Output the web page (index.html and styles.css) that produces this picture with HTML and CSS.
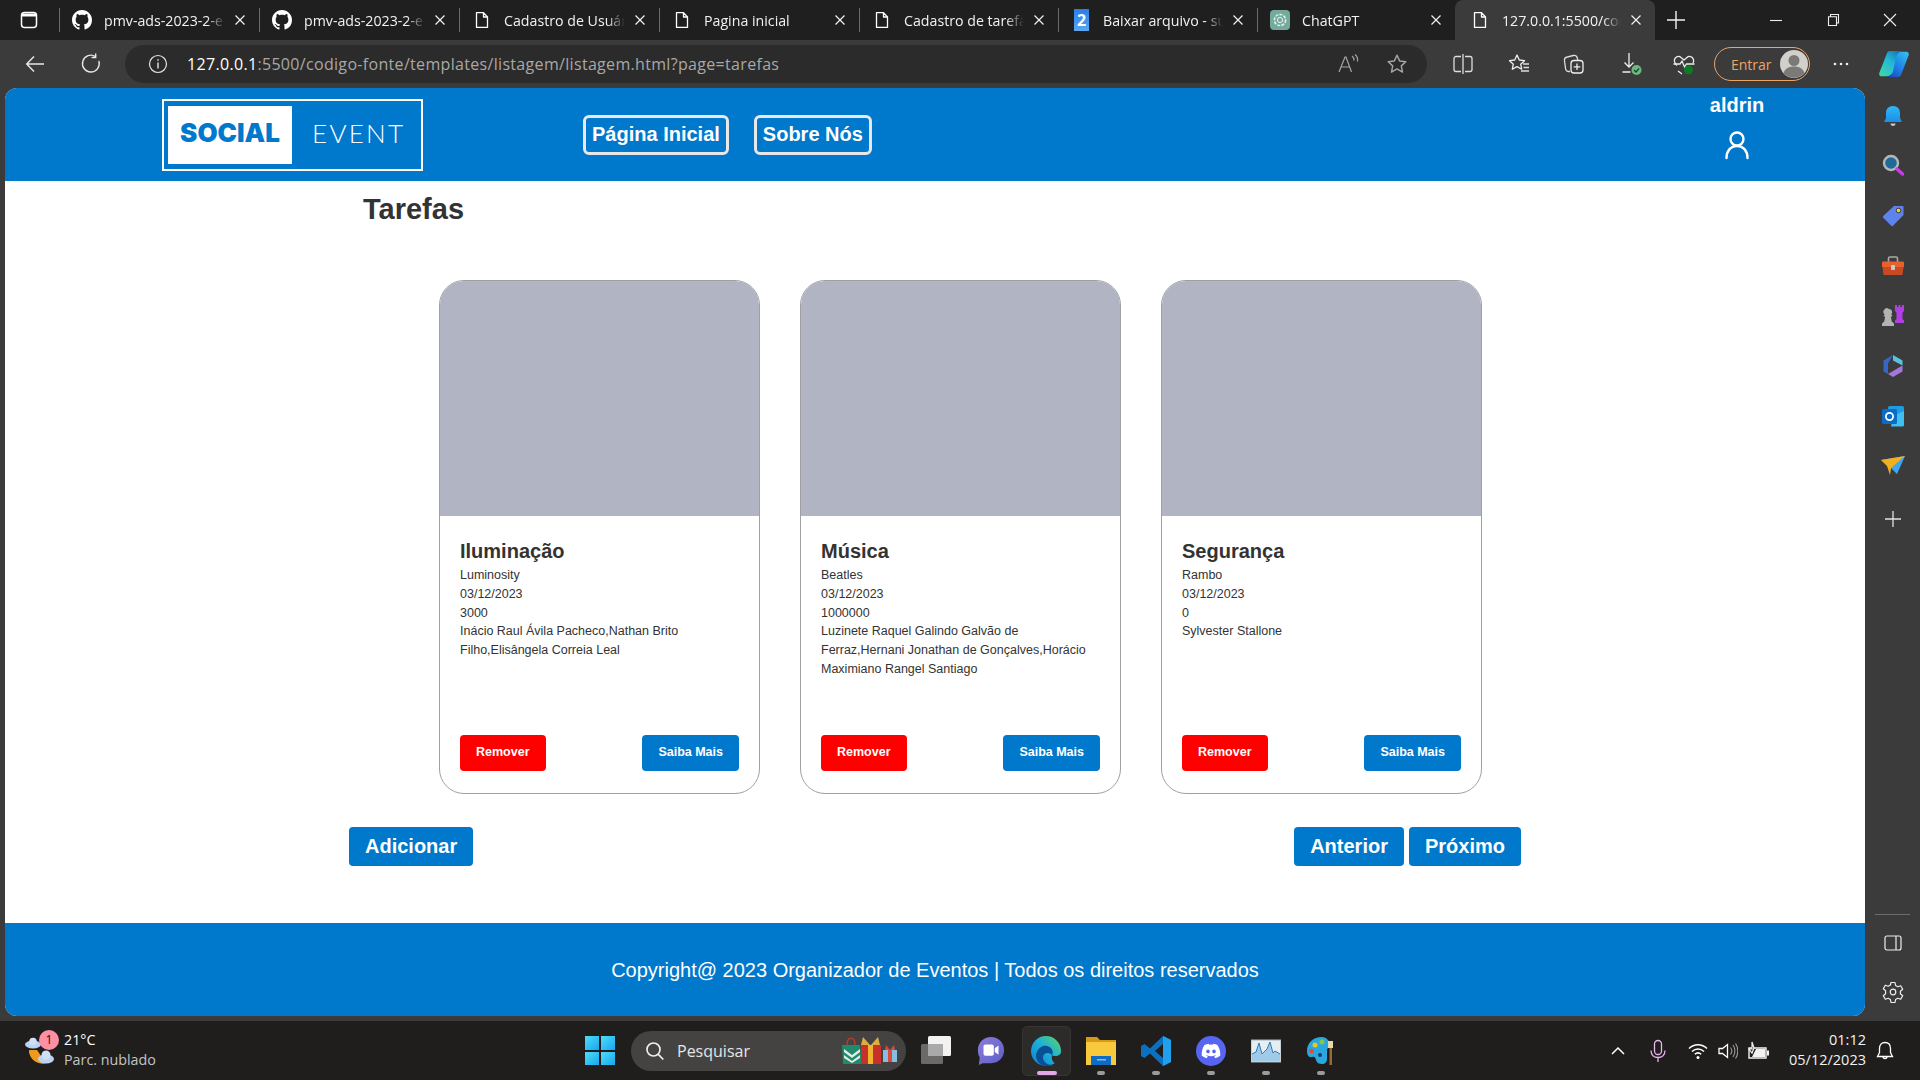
FILE: index.html
```html
<!DOCTYPE html>
<html lang="pt-BR">
<head>
<meta charset="utf-8">
<title>Tarefas</title>
<link rel="stylesheet" href="styles.css">
</head>
<body>
<svg class="sprite" width="0" height="0" aria-hidden="true">
  <defs>
    <symbol id="gh" viewBox="0 0 16 16"><path fill="#fff" d="M8 0C3.58 0 0 3.58 0 8c0 3.54 2.29 6.53 5.47 7.59.4.07.55-.17.55-.38 0-.19-.01-.82-.01-1.49-2.01.37-2.53-.49-2.69-.94-.09-.23-.48-.94-.82-1.13-.28-.15-.68-.52-.01-.53.63-.01 1.08.58 1.23.82.72 1.21 1.87.87 2.33.66.07-.52.28-.87.51-1.07-1.78-.2-3.64-.89-3.64-3.95 0-.87.31-1.59.82-2.15-.08-.2-.36-1.02.08-2.12 0 0 .67-.21 2.2.82.64-.18 1.32-.27 2-.27.68 0 1.36.09 2 .27 1.53-1.04 2.2-.82 2.2-.82.44 1.1.16 1.92.08 2.12.51.56.82 1.27.82 2.15 0 3.07-1.87 3.75-3.65 3.95.29.25.54.73.54 1.48 0 1.07-.01 1.93-.01 2.2 0 .21.15.46.55.38A8.013 8.013 0 0016 8c0-4.42-3.58-8-8-8z"/></symbol>
    <symbol id="doc" viewBox="0 0 20 20"><path fill="none" stroke="#fff" stroke-width="1.3" stroke-linejoin="round" d="M4.5 2.6h7l4 4.4v10.400h-11zM11.500 2.600v4.400h4"/></symbol>
    <symbol id="x" viewBox="0 0 12 12"><path fill="none" stroke="#f2f2f2" stroke-width="1.2" d="M1.500 1.500l9 9M10.500 1.500l-9 9"/></symbol>
    <symbol id="star" viewBox="0 0 20 20"><path fill="none" stroke="currentColor" stroke-width="1.3" stroke-linejoin="round" d="M10 2l2.400 5.200 5.600.7-4.100 3.800 1.100 5.600-5-2.800-5 2.800 1.100-5.600L2 7.900l5.600-.7z"/></symbol>
    <symbol id="dot" viewBox="0 0 8 4"><rect width="8" height="4" rx="2" fill="#9b9b9b"/></symbol>
  </defs>
</svg>

<div class="tabstrip">
  <div class="tab-side">
    <svg class="ico-18" viewBox="0 0 18 18"><rect x="1.500" y="1.500" width="15" height="15" rx="3" fill="none" stroke="#fff" stroke-width="1.500"/><path d="M2 2.500h14v3H2z" fill="#fff"/></svg>
  </div>
  <div class="tab"><svg class="fav"><use href="#gh"/></svg><span class="tab-title">pmv-ads-2023-2-e</span><svg class="tab-x"><use href="#x"/></svg></div>
  <div class="tab"><svg class="fav"><use href="#gh"/></svg><span class="tab-title">pmv-ads-2023-2-e</span><svg class="tab-x"><use href="#x"/></svg></div>
  <div class="tab"><svg class="fav"><use href="#doc"/></svg><span class="tab-title">Cadastro de Usuário</span><svg class="tab-x"><use href="#x"/></svg></div>
  <div class="tab"><svg class="fav"><use href="#doc"/></svg><span class="tab-title">Pagina inicial</span><svg class="tab-x"><use href="#x"/></svg></div>
  <div class="tab tab-199"><svg class="fav"><use href="#doc"/></svg><span class="tab-title">Cadastro de tarefas</span><svg class="tab-x"><use href="#x"/></svg></div>
  <div class="tab tab-199"><span class="fav fav-two">2</span><span class="tab-title">Baixar arquivo - sua</span><svg class="tab-x"><use href="#x"/></svg></div>
  <div class="tab tab-198"><svg class="fav" viewBox="0 0 20 20"><rect width="20" height="20" rx="4" fill="#74aa9c"/><circle cx="10" cy="10" r="5.600" fill="none" stroke="#e8f2ef" stroke-width="1.500" stroke-dasharray="3 1.200"/><circle cx="10" cy="10" r="2.600" fill="none" stroke="#e8f2ef" stroke-width="1"/></svg><span class="tab-title">ChatGPT</span><svg class="tab-x"><use href="#x"/></svg></div>
  <div class="tab tab-active"><svg class="fav"><use href="#doc"/></svg><span class="tab-title">127.0.0.1:5500/codigo</span><svg class="tab-x"><use href="#x"/></svg></div>
  <div class="newtab"><svg class="ico-20" viewBox="0 0 20 20"><path stroke="#f2f2f2" stroke-width="1.400" d="M10 1v18M1 10h18"/></svg></div>
  <div class="winctl">
    <svg class="ico-14" viewBox="0 0 14 14"><path stroke="#eee" stroke-width="1.100" d="M1 7.500h12"/></svg>
    <svg class="ico-14" viewBox="0 0 14 14"><path fill="none" stroke="#eee" stroke-width="1.100" d="M2.500 3.800h8v8.700h-8zM4.500 3.800V1.500h8v8.500h-2"/></svg>
    <svg class="ico-14" viewBox="0 0 14 14"><path stroke="#eee" stroke-width="1.100" d="M1 1l12 12M13 1L1 13"/></svg>
  </div>
</div>

<div class="toolbar">
  <div class="tool tool-first"><svg class="ico-22" viewBox="0 0 22 22"><path fill="none" stroke="#e6e6e6" stroke-width="1.500" d="M20 11H3M10 3.500L2.700 11l7.300 7.500"/></svg></div>
  <div class="tool"><svg class="ico-22" viewBox="0 0 22 22"><path fill="none" stroke="#e6e6e6" stroke-width="1.400" d="M15.500 3.600A8.400 8.400 0 1 0 19 8.500M15.700 1v3.500h-3.600" stroke-linecap="round"/></svg></div>
  <div class="address">
    <svg class="ico-20 info" viewBox="0 0 20 20"><circle cx="10" cy="10" r="8.500" fill="none" stroke="#e6e6e6" stroke-width="1.200"/><path stroke="#e6e6e6" stroke-width="1.400" d="M10 8.500v6M10 5.200v1.600"/></svg>
    <span class="url"><span class="url-host">127.0.0.1</span>:5500/codigo-fonte/templates/listagem/listagem.html?page=tarefas</span>
    <div class="addr-actions">
      <svg class="ico-22 muted" viewBox="0 0 22 22"><path fill="none" stroke="currentColor" stroke-width="1.200" d="M2 19L8 4h1l5.500 15M4.200 14h8M15 3c1.500 1 2.200 2.500 2 4.500M18 1.500c2 1.700 3 4 2.500 7"/></svg>
      <svg class="ico-22 muted"><use href="#star"/></svg>
    </div>
  </div>
  <div class="tool tool-split"><svg class="ico-22" viewBox="0 0 22 22"><path fill="none" stroke="#ddd" stroke-width="1.300" d="M9 3.500H4a2 2 0 0 0-2 2v11a2 2 0 0 0 2 2h5M13 3.500h5a2 2 0 0 1 2 2v11a2 2 0 0 1-2 2h-5M11 1v20"/></svg></div>
  <div class="tool"><svg class="ico-22" viewBox="0 0 22 22"><path fill="none" stroke="#eee" stroke-width="1.300" stroke-linejoin="round" d="M9 2l2.300 5 5.200.7-3.800 3.500 1 5-4.700-2.600L4.300 16.200l1-5L1.500 7.700 6.700 7z"/><path stroke="#ddd" stroke-width="1.300" d="M15 11h6M15.500 14.500H21M13 18h8"/></svg></div>
  <div class="tool tool-54"><svg class="ico-22" viewBox="0 0 22 22"><path fill="none" stroke="#ddd" stroke-width="1.300" d="M7 18.500H5.500a3 3 0 0 1-2.800-2.200L1.500 8a3.500 3.500 0 0 1 2.800-4l6-1.500c2-.4 3.500.6 4 2.500l.5 2"/><rect x="8" y="7.500" width="12" height="12.500" rx="3" fill="#3b3b3b" stroke="#eee" stroke-width="1.300"/><path stroke="#eee" stroke-width="1.300" d="M14 10.500v6.500M10.700 13.800h6.600"/></svg></div>
  <div class="tool tool-62"><svg class="ico-22" viewBox="0 0 22 22"><path fill="none" stroke="#eee" stroke-width="1.300" d="M8 0v14M3.500 9.500L8 14l4.500-4.500M1.500 19h8"/><circle cx="15.500" cy="17" r="5" fill="#6cb981"/><path fill="none" stroke="#2a3a2d" stroke-width="1.200" d="M13 17l2 2 3-3.500"/></svg></div>
  <div class="tool tool-health"><svg class="ico-22" viewBox="0 0 22 22"><path fill="none" stroke="#eee" stroke-width="1.300" stroke-linejoin="round" d="M4 12.500C2 10.500 1 8.500 1.500 6.500c.8-3 4.500-4 6.500-2l3 2.500 3-2.500c2-2 5.700-1 6.500 2 .3 1.200.1 2.400-.4 3.500M5 18l4 3"/><path fill="none" stroke="#eee" stroke-width="1.300" d="M.5 11H7l2-3 2.500 6 2-3h8"/><circle cx="15.500" cy="17" r="4.500" fill="#0f7a26"/></svg></div>
  <div class="signin"><span class="signin-label">Entrar</span><span class="avatar"><svg class="ico-28" viewBox="0 0 28 28"><circle cx="14" cy="14" r="14" fill="#d2d0cb"/><circle cx="14" cy="10.500" r="5.500" fill="#7b7a78"/><path d="M3.500 23c1.500-4.500 5.500-6.500 10.500-6.500s9 2 10.500 6.500a14 14 0 0 1-21 0z" fill="#7b7a78"/></svg></span></div>
  <div class="tool tool-more"><svg class="ico-20" viewBox="0 0 20 20"><circle cx="4" cy="10" r="1.300" fill="#eee"/><circle cx="10" cy="10" r="1.300" fill="#eee"/><circle cx="16" cy="10" r="1.300" fill="#eee"/></svg></div>
  <div class="tool tool-copilot"><svg class="ico-copilot" viewBox="0 0 92 80"><defs><linearGradient id="cp1" x1="0" y1="1" x2=".8" y2="0"><stop offset="0" stop-color="#43d9a5"/><stop offset=".6" stop-color="#22b7d6"/><stop offset="1" stop-color="#1877b0"/></linearGradient><linearGradient id="cp2" x1="1" y1="0" x2=".2" y2="1"><stop offset="0" stop-color="#35c4ef"/><stop offset=".6" stop-color="#1f7fe6"/><stop offset="1" stop-color="#2148c4"/></linearGradient></defs><path fill="url(#cp2)" d="M67 75C64 79 60 80 54 80H22C34 78 38 72 40 62L50 18C52 8 60 2 72 2H84C90 2 93 7 91 13z"/><path fill="url(#cp1)" d="M25 5C28 1 32 0 38 0H72C60 2 56 8 53 18L43 62C41 72 30 78 20 78H8C2 78-1 73 1 67z"/></svg></div>
</div>

<div class="workarea">
  <div class="page">
    <header class="site-header">
      <div class="logo">
        <div class="logo-box"><span class="logo-social">SOCIAL</span></div>
        <span class="logo-event">EVENT</span>
      </div>
      <nav class="nav">
        <a class="nav-btn">Página Inicial</a>
        <a class="nav-btn">Sobre Nós</a>
      </nav>
      <div class="user">
        <span class="user-name">aldrin</span>
        <svg class="user-ico" viewBox="0 0 24 30"><circle cx="12" cy="9" r="6.500" fill="none" stroke="#fff" stroke-width="2.400"/><path fill="none" stroke="#fff" stroke-width="2.400" stroke-linecap="round" d="M1.500 28c0-7 4-12 10.500-12s10.500 5 10.500 12"/></svg>
      </div>
    </header>

    <main class="content">
      <h1 class="page-title">Tarefas</h1>
      <section class="cards">
        <article class="card">
          <div class="card-img"></div>
          <div class="card-body">
            <h2 class="card-title">Iluminação</h2>
            <p class="card-line">Luminosity</p>
            <p class="card-line">03/12/2023</p>
            <p class="card-line">3000</p>
            <p class="card-line">Inácio Raul Ávila Pacheco,Nathan Brito Filho,Elisângela Correia Leal</p>
            <div class="card-actions"><button class="btn-sm btn-red">Remover</button><button class="btn-sm btn-blue">Saiba Mais</button></div>
          </div>
        </article>
        <article class="card">
          <div class="card-img"></div>
          <div class="card-body">
            <h2 class="card-title">Música</h2>
            <p class="card-line">Beatles</p>
            <p class="card-line">03/12/2023</p>
            <p class="card-line">1000000</p>
            <p class="card-line">Luzinete Raquel Galindo Galvão de Ferraz,Hernani Jonathan de Gonçalves,Horácio Maximiano Rangel Santiago</p>
            <div class="card-actions"><button class="btn-sm btn-red">Remover</button><button class="btn-sm btn-blue">Saiba Mais</button></div>
          </div>
        </article>
        <article class="card">
          <div class="card-img"></div>
          <div class="card-body">
            <h2 class="card-title">Segurança</h2>
            <p class="card-line">Rambo</p>
            <p class="card-line">03/12/2023</p>
            <p class="card-line">0</p>
            <p class="card-line">Sylvester Stallone</p>
            <div class="card-actions"><button class="btn-sm btn-red">Remover</button><button class="btn-sm btn-blue">Saiba Mais</button></div>
          </div>
        </article>
      </section>
      <div class="pager">
        <button class="btn-lg">Adicionar</button>
        <div class="pager-right"><button class="btn-lg">Anterior</button><button class="btn-lg">Próximo</button></div>
      </div>
    </main>

    <footer class="site-footer">Copyright@ 2023 Organizador de Eventos | Todos os direitos reservados</footer>
  </div>

  <aside class="sidepanel">
    <div class="side-top">
      <svg class="ico-24" viewBox="0 0 24 24"><defs><linearGradient id="bell" x1="0" y1="0" x2="0" y2="1"><stop offset="0" stop-color="#2fb7f5"/><stop offset="1" stop-color="#1a8fe8"/></linearGradient></defs><path fill="url(#bell)" d="M12 2c4.500 0 7 3 7 7v5l2 4H3l2-4V9c0-4 2.500-7 7-7z"/><path fill="#c9c9c9" d="M9.500 19.500h5c0 1.500-1 2.500-2.500 2.500s-2.500-1-2.500-2.500z"/></svg>
      <svg class="ico-24 side-search" viewBox="0 0 24 24"><circle cx="10" cy="10" r="7" fill="#1f6a96" stroke="#b7b7b7" stroke-width="2.400"/><path stroke="#c43fe0" stroke-width="3.400" stroke-linecap="round" d="M16 16l5.500 5"/></svg>
      <svg class="ico-24" viewBox="0 0 24 24"><path fill="#5f83ee" d="M13 2h8.500c.8 0 1 .5 1 1v8L12 21.800c-.6.500-1.300.5-1.800 0L2.200 13.800c-.5-.5-.5-1.200 0-1.800z"/><circle cx="17.500" cy="6.500" r="2.300" fill="#f4cf2d" stroke="#222" stroke-width=".8"/></svg>
      <svg class="ico-24" viewBox="0 0 24 24"><path fill="none" stroke="#a9a9a9" stroke-width="1.600" d="M7.500 8V4.500c0-1 .5-1.500 1.500-1.500h6c1 0 1.500.5 1.500 1.500V8"/><path fill="#e8602c" d="M1 9c0-1 .5-1.500 1.500-1.500h19c1 0 1.500.5 1.500 1.500v4H1z"/><path fill="#c94a22" d="M1.500 13h21l-.8 6.500c-.1 1-.7 1.500-1.700 1.500H4c-1 0-1.600-.5-1.700-1.500z"/><rect x="10" y="11" width="4" height="5" rx="1" fill="#c8c8c8"/></svg>
      <svg class="ico-24" viewBox="0 0 24 24"><path fill="#b3b3b3" d="M8 5a3.200 3.200 0 0 1 2.200 5.500l1 .8v1.200H9.800l1 5 2.200 2V22H1v-2.500l2.200-2 1-5H2.800v-1.200l1-.8A3.200 3.200 0 0 1 8 5z"/><path fill="#b13ee6" d="M14 1h2v2h1.500V1h2v2H21V1h2v6l-1.500 1.500V15l1.500 1.500V19h-9v-2.500l1.500-1.500V8.500L14 7z"/></svg>
      <svg class="ico-24" viewBox="0 0 24 24"><path fill="#57c3df" d="M12 1l9.500 5.500v5L12 6.500z"/><path fill="#3567c9" d="M12 1L2.500 6.500v11l4.500 2.500V9.500z"/><path fill="#a477dc" d="M7 20l5 3 9.500-5.500v-6L12 17z"/></svg>
      <svg class="ico-24" viewBox="0 0 24 24"><rect x="7" y="2" width="16" height="18" rx="1.500" fill="#1f9be3"/><path fill="#3fc0f0" d="M12 12l11-5v14a1.500 1.500 0 0 1-1.500 1.500H10z"/><rect x="1" y="5" width="15" height="15" rx="1.500" fill="#0a6cc4"/><circle cx="8.500" cy="12.500" r="3.600" fill="none" stroke="#fff" stroke-width="1.800"/></svg>
      <svg class="ico-24" viewBox="0 0 24 24"><path fill="#3fa7f0" d="M0 6l24-4-8 18-6-6z"/><path fill="#f2b01e" d="M0 6l24-4-14 12-1 7-3-9z"/></svg>
      <svg class="ico-18 side-plus" viewBox="0 0 18 18"><path stroke="#e2e2e2" stroke-width="1.300" d="M9 1v16M1 9h16"/></svg>
    </div>
    <div class="side-bottom">
      <div class="side-rule"></div>
      <svg class="ico-20 side-layout" viewBox="0 0 20 20"><rect x="2" y="3" width="16" height="14" rx="2" fill="none" stroke="#eee" stroke-width="1.200"/><path stroke="#eee" stroke-width="1.200" d="M13 3v14"/></svg>
      <svg class="ico-22" viewBox="0 0 22 22"><path fill="none" stroke="#eee" stroke-width="1.200" stroke-linejoin="round" d="M9 1.500h4l.6 3 2.200 1.200 2.900-1 2 3.500-2.300 2v2.600l2.300 2-2 3.500-2.900-1-2.200 1.200-.6 3H9l-.6-3-2.200-1.200-2.900 1-2-3.500 2.300-2V9.700l-2.300-2 2-3.500 2.900 1 2.200-1.200z"/><circle cx="11" cy="11" r="2.800" fill="none" stroke="#eee" stroke-width="1.200"/></svg>
    </div>
  </aside>
</div>

<div class="taskbar">
  <div class="weather">
    <svg class="weather-ico" viewBox="0 0 30 30"><path fill="#ee9a1c" d="M4 15c1 8 9 14 18 12-3 1-13-1-14-12z"/><path fill="#ee9a1c" d="M4 14c0 9 8 15 17 13l-9-13z"/><ellipse cx="8" cy="8.500" rx="8" ry="4" fill="#bcd3f2"/><circle cx="8" cy="5.500" r="3.800" fill="#cfe0f7"/><ellipse cx="21" cy="23" rx="8" ry="4.500" fill="#bcd3f2"/><circle cx="21" cy="19" r="4.500" fill="#cfe0f7"/></svg>
    <span class="badge">1</span>
    <div class="weather-text"><span class="weather-temp">21°C</span><span class="weather-desc">Parc. nublado</span></div>
  </div>
  <div class="win-logo"><span></span><span></span><span></span><span></span></div>
  <div class="search">
    <svg class="ico-20" viewBox="0 0 20 20"><circle cx="8.500" cy="8.500" r="6.500" fill="none" stroke="#eee" stroke-width="1.700"/><path stroke="#eee" stroke-width="1.700" d="M13.300 13.300l5 5.200"/></svg>
    <span class="search-label">Pesquisar</span>
    <svg class="search-art" viewBox="0 0 56 27"><path fill="#1f8a6c" d="M0 8h18l2 19H1z"/><path fill="#e6ece6" d="M2 12l8 6 8-6v3l-8 6-8-6zM2 18l8 6 8-6v3l-8 5-8-5z"/><path fill="none" stroke="#b43a2c" stroke-width="1.500" d="M5 8c0-9 8-9 8 0"/><rect x="19" y="8" width="20" height="19" fill="#c9302a"/><rect x="26" y="8" width="5" height="19" fill="#eeb62f"/><path fill="#dcae42" d="M28 8l-7-8-2 8zM29 8l7-8 2 8z"/><rect x="41" y="13" width="14" height="12" fill="#86bde0"/><rect x="46" y="13" width="4" height="12" fill="#d9493e"/><path fill="#d9493e" d="M48 13l-4-5-1 5zM48 13l4-5 1 5z"/></svg>
  </div>
  <div class="app app-first">
    <svg class="ico-30" viewBox="0 0 30 30"><rect x="0" y="8" width="22" height="20" rx="1.500" fill="#6a6a6a"/><rect x="7" y="0" width="23" height="20" rx="1.500" fill="#f2f2f2"/><rect x="7" y="8" width="15" height="12" fill="#a9a9a9"/></svg>
  </div>
  <div class="app">
    <svg class="ico-30" viewBox="0 0 30 32"><defs><linearGradient id="mt" x1="0" y1="0" x2="1" y2="1"><stop offset="0" stop-color="#8d7cdb"/><stop offset="1" stop-color="#5b5fc7"/></linearGradient></defs><path fill="url(#mt)" d="M15 1c8 0 14 6 14 14s-6 14-14 14H6l-4 2 1-8C1.500 20.500 1 18 1 15 1 7 7 1 15 1z"/><rect x="7" y="9" width="11" height="12" rx="2" fill="#fff"/><path fill="#fff" d="M19 13l4-3v10l-4-3z"/></svg>
  </div>
  <div class="app app-active">
    <svg class="ico-30" viewBox="0 0 30 30"><defs><linearGradient id="ed1" x1="0" y1="1" x2="1" y2="0"><stop offset="0" stop-color="#0b7fd4"/><stop offset=".55" stop-color="#1fb2d6"/><stop offset="1" stop-color="#62d45a"/></linearGradient></defs><circle cx="15" cy="15" r="15" fill="url(#ed1)"/><path fill="#2c2b2a" d="M31 16C29 20 23 21 21 19C20 24 22 27 26 28L31 31z"/><path fill="#0a4e96" d="M12 10C17 9 21 12 21.500 15C22 17 21.500 18.500 21 19C17 15.500 12 17 12 21.500C12 25.500 16 29.500 23 29C20.500 30 18 30 15 30C9 30 5 25 5 19C6 14 9 11 12 10z"/></svg>
    <span class="app-bar"></span>
  </div>
  <div class="app">
    <svg class="ico-30" viewBox="0 0 30 30"><path fill="#d69a1a" d="M0 1h11l3 3h16v6H0z"/><path fill="#f8c93c" d="M0 6h30v23H0z"/><path fill="#0e6bc4" d="M5 20h20v9H5z"/><path fill="#7fbcec" d="M11 23h9v1.500h-9z"/></svg>
    <svg class="app-dot"><use href="#dot"/></svg>
  </div>
  <div class="app">
    <svg class="ico-30" viewBox="0 0 30 30"><path fill="#0c70c0" d="M22 0l8 4v22l-8 4L9 17.500l-5.500 4.500L0 20v-10l3.500-2L9 12.500z"/><path fill="#21a0ec" d="M22 0l8 4v22l-8 4z"/><path fill="#1f1e1d" d="M22 8v14l-8-7z"/></svg>
    <svg class="app-dot"><use href="#dot"/></svg>
  </div>
  <div class="app">
    <svg class="ico-30" viewBox="0 0 32 32"><circle cx="16" cy="16" r="16" fill="#5865f2"/><path fill="#fff" d="M23 9.500c-1.500-.6-3-1-4.500-1.300l-.5 1a14 14 0 0 0-4 0l-.5-1C12 8.500 10.500 9 9 9.500 6.500 13.500 5.800 17.300 6.200 21c1.800 1.300 3.600 2.100 5.300 2.600l1.100-1.800-1.800-.9.500-.4c3.300 1.500 6.200 1.500 9.400 0l.5.4-1.800.9 1.100 1.800c1.700-.5 3.500-1.300 5.300-2.600.5-4.300-.7-8-3-11.500zM12.800 18.500c-1 0-1.900-1-1.900-2.100s.8-2.100 1.900-2.100 1.900 1 1.900 2.100-.8 2.100-1.900 2.100zm6.400 0c-1 0-1.900-1-1.900-2.100s.8-2.100 1.900-2.100 1.900 1 1.900 2.100-.8 2.100-1.900 2.100z"/></svg>
    <svg class="app-dot"><use href="#dot"/></svg>
  </div>
  <div class="app">
    <svg class="ico-30" viewBox="0 0 30 30"><rect x="0" y="4" width="30" height="22" fill="#e6edf3" stroke="#a9b3bb"/><path fill="#9fcbe9" d="M1 25v-7l4-2 3-9 3 11 3-3 2-2 3-7 3 11 2-2 5 3v7z"/><path fill="none" stroke="#2a7db8" stroke-width="1" d="M1 18l4-2 3-9 3 11 3-3 2-2 3-7 3 11 2-2 5 3"/></svg>
    <svg class="app-dot"><use href="#dot"/></svg>
  </div>
  <div class="app">
    <svg class="ico-30" viewBox="0 0 30 30"><path fill="#2aa7df" d="M16 1C7 1 1 7 1 15c0 4 2 7 5 6s3 0 4 3 3 4 6 4 5-2 5-5V13l4-3C23 4 20 1 16 1z"/><circle cx="16" cy="6" r="2.500" fill="#8cc63f"/><circle cx="9" cy="9" r="2.500" fill="#f0c420"/><circle cx="5.500" cy="15" r="2.300" fill="#e5483c"/><circle cx="14" cy="19" r="2" fill="#1b3f5f"/><rect x="22" y="5" width="5" height="7" fill="#e9d9a8"/><rect x="23.500" y="12" width="2.500" height="17" fill="#9a6a30"/></svg>
    <svg class="app-dot"><use href="#dot"/></svg>
  </div>
  <div class="tray">
    <svg class="ico-16 tray-chev" viewBox="0 0 16 16"><path fill="none" stroke="#fff" stroke-width="1.500" d="M2 11l6-6 6 6"/></svg>
    <svg class="ico-24 tray-mic" viewBox="0 0 24 24"><rect x="8.500" y="1.500" width="7" height="14" rx="3.500" fill="none" stroke="#e8b4ee" stroke-width="1.300"/><path fill="none" stroke="#e8b4ee" stroke-width="1.300" d="M5 11.500c0 4.500 3 7 7 7s7-2.500 7-7M12 18.500V23"/></svg>
    <svg class="ico-20 tray-wifi" viewBox="0 0 20 20"><path fill="none" stroke="#fff" stroke-width="1.500" d="M1 7.500c5-5 13-5 18 0M4 10.500c3.500-3.500 8.500-3.500 12 0M6.800 13.300c2-1.800 4.400-1.800 6.400 0"/><circle cx="10" cy="16.500" r="1.500" fill="#fff"/></svg>
    <svg class="ico-20 tray-vol" viewBox="0 0 20 20"><path fill="none" stroke="#fff" stroke-width="1.300" d="M1 7.500h3.500L9.500 3.500v13l-5-4H1z"/><path fill="none" stroke="#999" stroke-width="1.100" d="M12.500 6.500c1.500 2 1.500 5 0 7M15 4c2.500 3.500 2.500 8.500 0 12M17.500 2.500c3 4 3 11 0 15"/></svg>
    <svg class="ico-22 tray-bat" viewBox="0 0 22 22"><path fill="none" stroke="#f2f2f2" stroke-width="1.400" d="M2 8h17v10H2z"/><path fill="#f2f2f2" d="M9 9h9v8H5z"/><path fill="#f2f2f2" d="M20 10.500h2v5h-2z"/><path fill="#1f1e1d" stroke="#f2f2f2" stroke-width="1.200" d="M5 2v7H2l3 4 2-5z"/></svg>
    <div class="clock"><span>01:12</span><span>05/12/2023</span></div>
    <svg class="ico-20 tray-bell" viewBox="0 0 20 20"><path fill="none" stroke="#fff" stroke-width="1.300" d="M10 1.500c3.500 0 5.500 2.500 5.500 6v4l2 4h-15l2-4v-4c0-3.500 2-6 5.500-6zM8 15.500c0 2.700 4 2.700 4 0"/></svg>
  </div>
</div>
</body>
</html>
```

FILE: styles.css
```css
* { box-sizing: border-box; }
html, body { margin: 0; padding: 0; }
body {
  width: 1920px;
  height: 1080px;
  overflow: hidden;
  display: flex;
  flex-direction: column;
  background: #3b3b3b;
  font-family: "Liberation Sans", Arial, sans-serif;
}
.sprite { position: absolute; }
.ico-14 { width: 14px; height: 14px; flex: none; }
.ico-16 { width: 16px; height: 16px; flex: none; }
.ico-18 { width: 18px; height: 18px; flex: none; }
.ico-20 { width: 20px; height: 20px; flex: none; }
.ico-22 { width: 22px; height: 22px; flex: none; }
.ico-24 { width: 24px; height: 24px; flex: none; }
.ico-28 { width: 28px; height: 28px; flex: none; }
.ico-30 { width: 30px; height: 30px; flex: none; }
.ico-copilot { width: 30px; height: 26px; }
.muted { color: #a6a6a6; }

/* tab strip */
.tabstrip {
  height: 40px;
  display: flex;
  align-items: stretch;
  background: #1f1f1f;
  font-family: "Open Sans", sans-serif;
  font-size: 14.200px;
  color: #f2f2f2;
  flex: none;
}
.tab-side { width: 59px; display: flex; align-items: center; justify-content: center; padding-right: 1px; flex: none; }
.tab {
  width: 200px;
  flex: none;
  display: flex;
  align-items: center;
  padding: 0 13px;
  position: relative;
}
.tab::before {
  content: "";
  position: absolute;
  left: 0;
  top: 8px;
  bottom: 8px;
  width: 1px;
  background: #6a6a6a;
}
.tab-199 { width: 199px; }
.tab-198 { width: 198px; }
.tab-active {
  background: #3b3b3b;
  border-radius: 8px 8px 0 0;
  padding-left: 15px;
}
.tab-active::before { display: none; }
.fav { width: 20px; height: 20px; flex: none; }
.fav-two {
  display: flex;
  align-items: center;
  justify-content: center;
  width: 15px;
  margin: 0 2px 0 3px;
  background: linear-gradient(#2b7de9, #5aa7f0);
  color: #fff;
  font-weight: 700;
  font-size: 16px;
  height: 22px;
}
.tab-title {
  flex: 1;
  min-width: 0;
  margin-left: 12px;
  white-space: nowrap;
  overflow: hidden;
  -webkit-mask-image: linear-gradient(90deg, #000 85%, transparent 100%);
  mask-image: linear-gradient(90deg, #000 85%, transparent 100%);
}
.tab-x { width: 12px; height: 12px; margin-left: 9px; flex: none; }
.newtab { width: 40px; display: flex; align-items: center; justify-content: center; margin-left: 1px; flex: none; }
.winctl { flex: 1; display: flex; align-items: center; padding-left: 73px; gap: 43px; }

/* toolbar */
.toolbar { height: 48px; display: flex; align-items: center; background: #3b3b3b; flex: none; }
.tool { width: 56px; height: 38px; display: flex; align-items: center; justify-content: center; flex: none; }
.tool-first { margin-left: 7px; }
.tool-split { margin-left: 8px; }
.tool-54 { width: 54px; }
.tool-62 { width: 62px; }
.tool-health { width: 42px; }
.tool-more { width: 62px; }
.tool-copilot { width: 44px; }
.address {
  width: 1302px;
  height: 38px;
  margin-left: 6px;
  display: flex;
  align-items: center;
  background: #2b2b2b;
  border-radius: 19px;
  padding: 0 19px 0 23px;
  font-family: "Open Sans", sans-serif;
  font-size: 16px;
  letter-spacing: .32px;
  color: #a8a8a8;
  flex: none;
}
.url { margin-left: 19px; white-space: nowrap; }
.url-host { color: #fff; }
.addr-actions { margin-left: auto; display: flex; gap: 27px; align-items: center; }
.signin {
  width: 96px;
  height: 34px;
  margin-left: 9px;
  display: flex;
  align-items: center;
  border: 1.500px solid #eda467;
  border-radius: 17px;
  padding: 0 1px 0 16px;
  color: #eda467;
  font-family: "Open Sans", sans-serif;
  font-size: 14px;
  flex: none;
}
.avatar { margin-left: auto; display: flex; }

/* work area */
.workarea { height: 933px; display: flex; flex: none; }
.page {
  width: 1860px;
  height: 928px;
  margin-left: 5px;
  display: flex;
  flex-direction: column;
  background: #fff;
  border-radius: 12px;
  overflow: hidden;
  flex: none;
}

.site-header {
  height: 93px;
  flex: none;
  display: flex;
  align-items: center;
  background: #0078cc;
  padding-left: 157px;
}
.logo {
  width: 261px;
  height: 72px;
  border: 2px solid #fff;
  padding: 5px 4px;
  display: flex;
  align-items: center;
  flex: none;
}
.logo-box {
  width: 124px;
  height: 58px;
  background: #fff;
  display: flex;
  align-items: center;
  justify-content: center;
  padding-bottom: 4px;
  flex: none;
}
.logo-social {
  font-family: Inter, sans-serif;
  font-weight: 900;
  font-size: 26px;
  color: #0078cc;
}
.logo-event {
  margin-left: 20px;
  padding-bottom: 4px;
  font-family: Lato, sans-serif;
  font-weight: 300;
  font-size: 26px;
  letter-spacing: 2.300px;
  color: #fff;
}
.nav { display: flex; gap: 25px; margin-left: 160px; }
.nav-btn {
  height: 40px;
  display: flex;
  align-items: center;
  padding: 0 6px;
  border: 3px solid #e8e8e8;
  border-radius: 6px;
  color: #fff;
  font-size: 20px;
  font-weight: 700;
}
.user {
  margin-left: auto;
  margin-right: 90px;
  width: 76px;
  align-self: flex-start;
  display: flex;
  flex-direction: column;
  align-items: center;
  color: #fff;
  padding-top: 5px;
}
.user-name { font-size: 20px; font-weight: 700; line-height: 24px; }
.user-ico { width: 24px; height: 30px; margin-top: 13px; }

.content { height: 742px; flex: none; }
.page-title {
  margin: 12px 0 0 358px;
  font-size: 29px;
  font-weight: 700;
  line-height: 33px;
  color: #333;
}
.cards { display: flex; gap: 40px; margin: 54px 0 0 434px; }
.card {
  width: 321px;
  height: 514px;
  border: 1px solid #a0a0a0;
  border-radius: 25px;
  overflow: hidden;
  display: flex;
  flex-direction: column;
  background: #fff;
}
.card-img { height: 235px; background: #b0b4c3; flex: none; }
.card-body { flex: 1; display: flex; flex-direction: column; padding: 24px 20px 22px; min-height: 0; }
.card-title { margin: 0 0 3px; font-size: 20px; font-weight: 700; line-height: 23px; color: #333; }
.card-line { margin: 0; font-size: 12.500px; line-height: 18.750px; color: #333; }
.card-actions { margin-top: auto; display: flex; justify-content: space-between; }
.btn-sm {
  height: 36px;
  padding: 0 16px 2px;
  border: 0;
  border-radius: 4px;
  color: #fff;
  font-family: "Liberation Sans", Arial, sans-serif;
  font-size: 12.500px;
  font-weight: 700;
}
.btn-red { background: #f00; min-width: 85px; }
.btn-blue { background: #0078cc; }
.pager { display: flex; justify-content: space-between; width: 1172px; margin: 33px 0 0 344px; }
.pager-right { display: flex; gap: 5px; }
.btn-lg {
  height: 39px;
  padding: 0 16px;
  border: 0;
  border-radius: 4px;
  background: #0078cc;
  color: #fff;
  font-family: "Liberation Sans", Arial, sans-serif;
  font-size: 20px;
  font-weight: 700;
}
.site-footer {
  flex: 1;
  display: flex;
  align-items: center;
  justify-content: center;
  padding-top: 2px;
  background: #0078cc;
  color: #fff;
  font-size: 20px;
}

/* side panel */
.sidepanel {
  width: 55px;
  display: flex;
  flex-direction: column;
  align-items: center;
  padding-bottom: 2px;
}
.side-top { display: flex; flex-direction: column; align-items: center; gap: 26px; padding-top: 16px; }
.side-search { margin-top: -1px; margin-bottom: 1px; }
.side-plus { margin-top: 6px; }
.side-bottom { margin-top: auto; display: flex; flex-direction: column; align-items: center; gap: 18px; padding-bottom: 16px; }
.side-layout { margin-bottom: 10px; }
.side-rule { width: 35px; height: 1px; background: #6c6c6c; }

/* taskbar */
.taskbar {
  height: 59px;
  display: flex;
  align-items: center;
  background: #1f1e1d;
  flex: none;
  margin-top: auto;
  color: #f2f2f2;
  font-family: "Open Sans", sans-serif;
}
.weather { width: 585px; display: flex; align-items: center; padding-left: 25px; position: relative; flex: none; }
.weather-ico { width: 30px; height: 30px; }
.badge {
  position: absolute;
  left: 39px;
  top: 0;
  width: 20px;
  height: 20px;
  border-radius: 50%;
  background: #ff8fa3;
  color: #111;
  font-size: 12px;
  line-height: 20px;
  text-align: center;
}
.weather-text {
  margin-left: 9px;
  padding-bottom: 2px;
  display: flex;
  flex-direction: column;
  font-size: 14.300px;
  line-height: 20px;
}
.weather-temp { color: #fff; }
.weather-desc { color: #c4c4c4; }
.win-logo {
  width: 30px;
  height: 29px;
  display: grid;
  grid-template-columns: 1fr 1fr;
  grid-template-rows: 1fr 1fr;
  gap: 2px;
  flex: none;
}
.win-logo span { background: linear-gradient(135deg, #4fdcf7, #18a6f0); }
.search {
  width: 275px;
  height: 40px;
  margin-left: 16px;
  display: flex;
  align-items: center;
  border-radius: 20px;
  background: #444342;
  padding: 0 8px 0 14px;
  flex: none;
}
.search-label { margin-left: 12px; font-size: 16px; color: #e6e6e6; }
.search-art { width: 56px; height: 27px; margin-left: auto; }
.app {
  width: 55px;
  height: 50px;
  display: flex;
  align-items: center;
  justify-content: center;
  position: relative;
  flex: none;
}
.app-first { margin-left: 2.500px; }
.app-active { background: #2c2b2a; border: 1px solid #363534; border-radius: 5px; width: 49px; margin: 0 3px; }
.app-bar { position: absolute; bottom: 0; left: 14px; width: 20px; height: 4px; border-radius: 2px; background: #e3a8ea; }
.app-dot { position: absolute; bottom: 1px; left: 23.500px; width: 8px; height: 4px; }
.tray { margin-left: auto; display: flex; align-items: center; width: 320px; flex: none; padding-left: 10px; }
.tray-mic { margin-left: 20px; }
.tray-wifi { margin-left: 18px; }
.tray-vol { margin-left: 10px; }
.tray-bat { margin-left: 9px; }
.clock {
  margin-left: auto;
  padding-bottom: 1px;
  display: flex;
  flex-direction: column;
  align-items: flex-end;
  font-size: 14.500px;
  line-height: 20px;
}
.tray-bell { margin: 0 25px 0 9px; }
```
